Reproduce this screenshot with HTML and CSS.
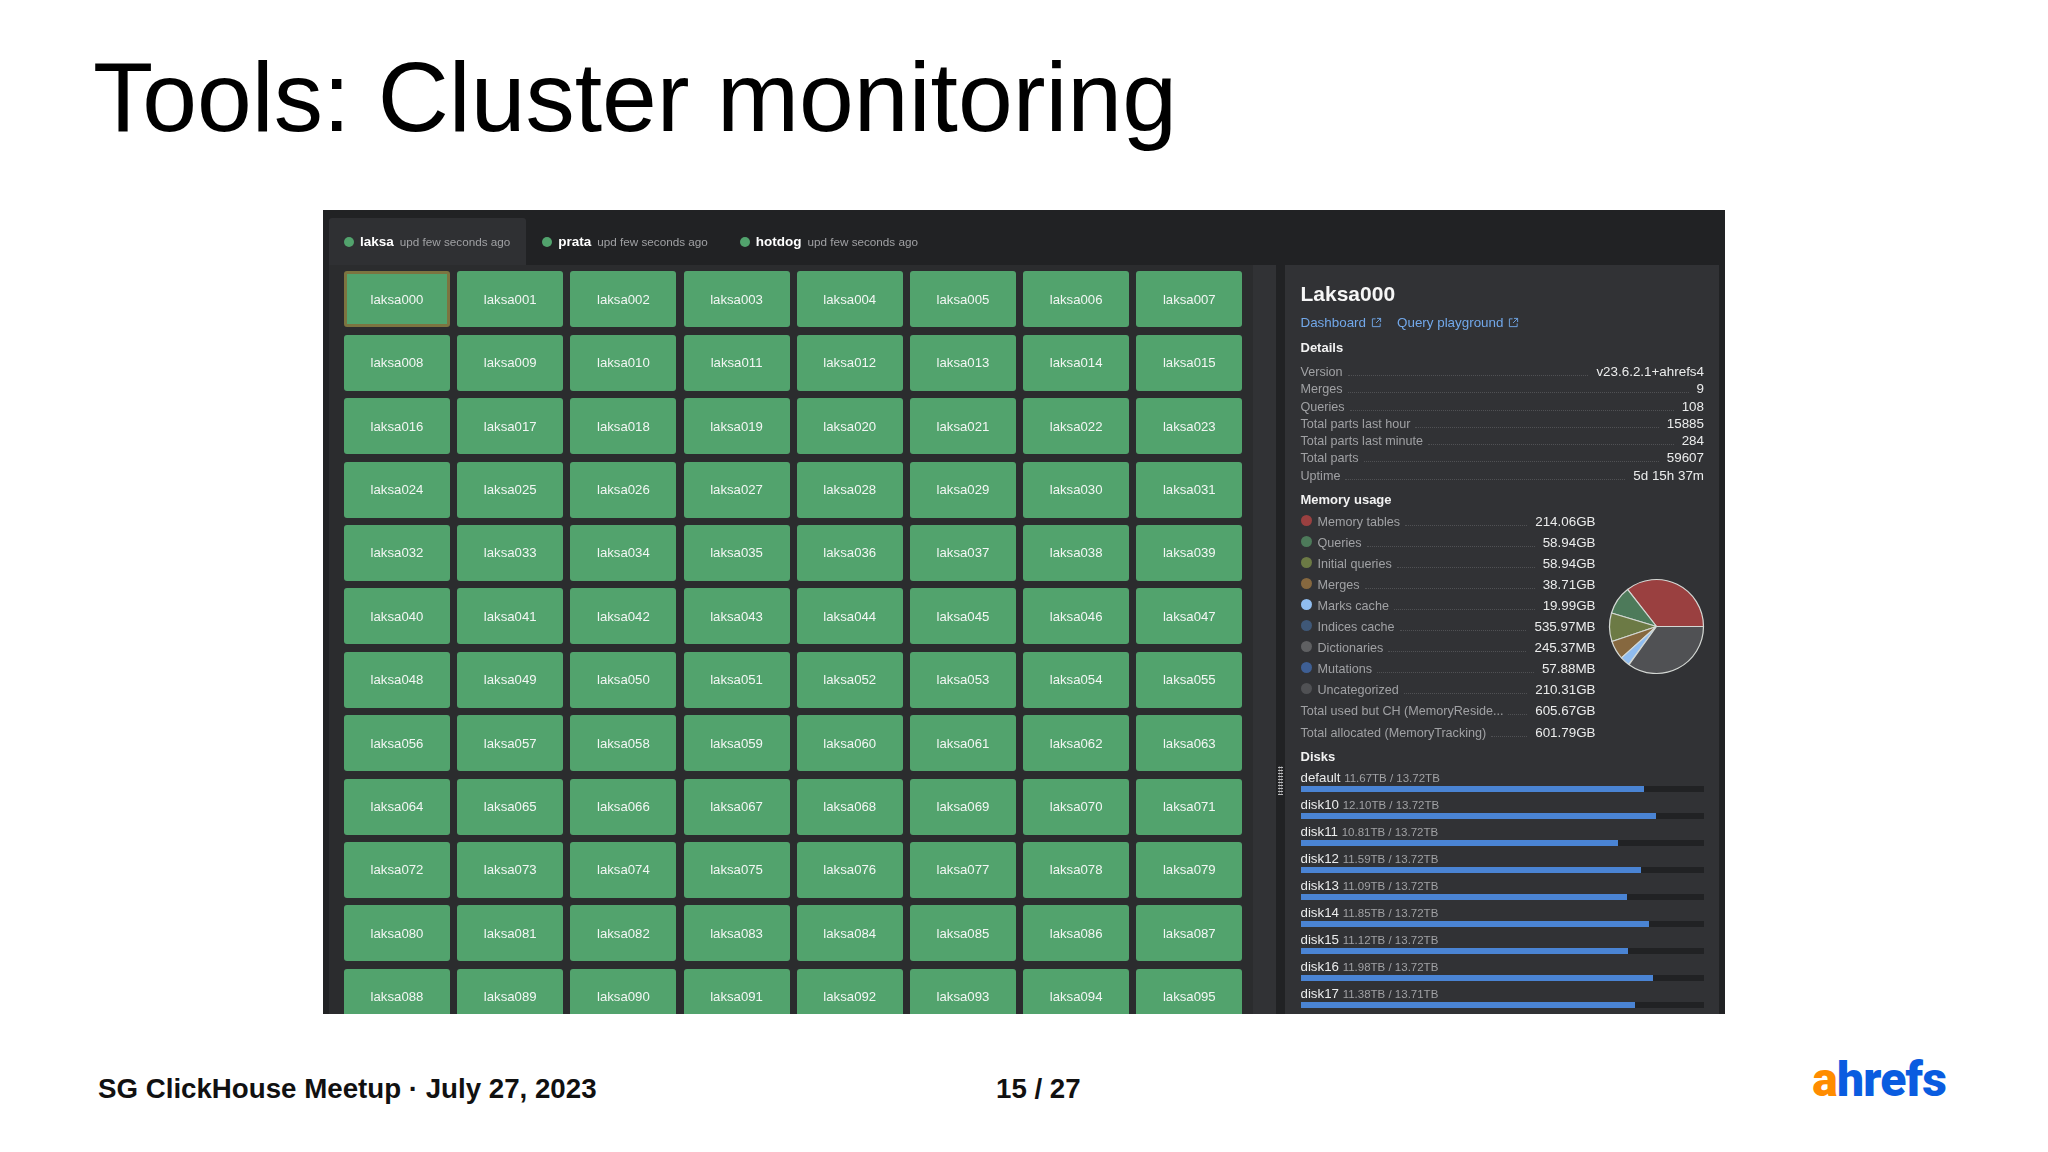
FILE: index.html
```html
<!DOCTYPE html>
<html lang="en">
<head>
  <meta charset="UTF-8" />
  <title>Tools: Cluster monitoring</title>
  <link rel="stylesheet" href="styles.css">
</head>
<body>

<div class="slide">
  <h1 class="slide-title">Tools: Cluster monitoring</h1>

  <div class="shot">
    <div class="tabs">
      <div class="tab active"><span class="dot"></span><b>laksa</b><span class="upd">upd few seconds ago</span></div>
      <div class="tab"><span class="dot"></span><b>prata</b><span class="upd">upd few seconds ago</span></div>
      <div class="tab"><span class="dot"></span><b>hotdog</b><span class="upd">upd few seconds ago</span></div>
    </div>

    <div class="shot-body">
      <div class="nodes-pane">
        <div class="nodes">
          <div class="node selected">laksa000</div>
          <div class="node">laksa001</div>
          <div class="node">laksa002</div>
          <div class="node">laksa003</div>
          <div class="node">laksa004</div>
          <div class="node">laksa005</div>
          <div class="node">laksa006</div>
          <div class="node">laksa007</div>
          <div class="node">laksa008</div>
          <div class="node">laksa009</div>
          <div class="node">laksa010</div>
          <div class="node">laksa011</div>
          <div class="node">laksa012</div>
          <div class="node">laksa013</div>
          <div class="node">laksa014</div>
          <div class="node">laksa015</div>
          <div class="node">laksa016</div>
          <div class="node">laksa017</div>
          <div class="node">laksa018</div>
          <div class="node">laksa019</div>
          <div class="node">laksa020</div>
          <div class="node">laksa021</div>
          <div class="node">laksa022</div>
          <div class="node">laksa023</div>
          <div class="node">laksa024</div>
          <div class="node">laksa025</div>
          <div class="node">laksa026</div>
          <div class="node">laksa027</div>
          <div class="node">laksa028</div>
          <div class="node">laksa029</div>
          <div class="node">laksa030</div>
          <div class="node">laksa031</div>
          <div class="node">laksa032</div>
          <div class="node">laksa033</div>
          <div class="node">laksa034</div>
          <div class="node">laksa035</div>
          <div class="node">laksa036</div>
          <div class="node">laksa037</div>
          <div class="node">laksa038</div>
          <div class="node">laksa039</div>
          <div class="node">laksa040</div>
          <div class="node">laksa041</div>
          <div class="node">laksa042</div>
          <div class="node">laksa043</div>
          <div class="node">laksa044</div>
          <div class="node">laksa045</div>
          <div class="node">laksa046</div>
          <div class="node">laksa047</div>
          <div class="node">laksa048</div>
          <div class="node">laksa049</div>
          <div class="node">laksa050</div>
          <div class="node">laksa051</div>
          <div class="node">laksa052</div>
          <div class="node">laksa053</div>
          <div class="node">laksa054</div>
          <div class="node">laksa055</div>
          <div class="node">laksa056</div>
          <div class="node">laksa057</div>
          <div class="node">laksa058</div>
          <div class="node">laksa059</div>
          <div class="node">laksa060</div>
          <div class="node">laksa061</div>
          <div class="node">laksa062</div>
          <div class="node">laksa063</div>
          <div class="node">laksa064</div>
          <div class="node">laksa065</div>
          <div class="node">laksa066</div>
          <div class="node">laksa067</div>
          <div class="node">laksa068</div>
          <div class="node">laksa069</div>
          <div class="node">laksa070</div>
          <div class="node">laksa071</div>
          <div class="node">laksa072</div>
          <div class="node">laksa073</div>
          <div class="node">laksa074</div>
          <div class="node">laksa075</div>
          <div class="node">laksa076</div>
          <div class="node">laksa077</div>
          <div class="node">laksa078</div>
          <div class="node">laksa079</div>
          <div class="node">laksa080</div>
          <div class="node">laksa081</div>
          <div class="node">laksa082</div>
          <div class="node">laksa083</div>
          <div class="node">laksa084</div>
          <div class="node">laksa085</div>
          <div class="node">laksa086</div>
          <div class="node">laksa087</div>
          <div class="node">laksa088</div>
          <div class="node">laksa089</div>
          <div class="node">laksa090</div>
          <div class="node">laksa091</div>
          <div class="node">laksa092</div>
          <div class="node">laksa093</div>
          <div class="node">laksa094</div>
          <div class="node">laksa095</div>
        </div>
        <div class="scroll-track"></div>
      </div>

      <div class="splitter"><div class="grip"></div></div>

      <div class="details">
        <h2 class="node-name">Laksa000</h2>
        <div class="links">
          <a href="#">Dashboard
            <svg class="ext" viewBox="0 0 12 12"><path d="M5 2H1.5v8.5H10V7M6.5 1.5h4v4M10.5 1.5 5.5 6.5"/></svg>
          </a>
          <a href="#">Query playground
            <svg class="ext" viewBox="0 0 12 12"><path d="M5 2H1.5v8.5H10V7M6.5 1.5h4v4M10.5 1.5 5.5 6.5"/></svg>
          </a>
        </div>

        <h3 class="details-head">Details</h3>
        <div class="kv-list">
          <div class="kv"><span class="k">Version</span><i></i><span class="v">v23.6.2.1+ahrefs4</span></div>
          <div class="kv"><span class="k">Merges</span><i></i><span class="v">9</span></div>
          <div class="kv"><span class="k">Queries</span><i></i><span class="v">108</span></div>
          <div class="kv"><span class="k">Total parts last hour</span><i></i><span class="v">15885</span></div>
          <div class="kv"><span class="k">Total parts last minute</span><i></i><span class="v">284</span></div>
          <div class="kv"><span class="k">Total parts</span><i></i><span class="v">59607</span></div>
          <div class="kv"><span class="k">Uptime</span><i></i><span class="v">5d 15h 37m</span></div>
        </div>

        <h3 class="details-head mem-head">Memory usage</h3>
        <div class="memory">
          <div class="mem-list">
            <div class="kv"><span class="swatch c-tables"></span><span class="k">Memory tables</span><i></i><span class="v">214.06GB</span></div>
            <div class="kv"><span class="swatch c-queries"></span><span class="k">Queries</span><i></i><span class="v">58.94GB</span></div>
            <div class="kv"><span class="swatch c-initial"></span><span class="k">Initial queries</span><i></i><span class="v">58.94GB</span></div>
            <div class="kv"><span class="swatch c-merges"></span><span class="k">Merges</span><i></i><span class="v">38.71GB</span></div>
            <div class="kv"><span class="swatch c-marks"></span><span class="k">Marks cache</span><i></i><span class="v">19.99GB</span></div>
            <div class="kv"><span class="swatch c-indices"></span><span class="k">Indices cache</span><i></i><span class="v">535.97MB</span></div>
            <div class="kv"><span class="swatch c-dicts"></span><span class="k">Dictionaries</span><i></i><span class="v">245.37MB</span></div>
            <div class="kv"><span class="swatch c-mutations"></span><span class="k">Mutations</span><i></i><span class="v">57.88MB</span></div>
            <div class="kv"><span class="swatch c-other"></span><span class="k">Uncategorized</span><i></i><span class="v">210.31GB</span></div>
            <div class="kv"><span class="k">Total used but CH (MemoryReside...</span><i></i><span class="v">605.67GB</span></div>
            <div class="kv"><span class="k">Total allocated (MemoryTracking)</span><i></i><span class="v">601.79GB</span></div>
          </div>
          <svg class="pie" viewBox="1.5 1.5 97 97">
            <path fill="#9a4040" d="M50 50H97A47 47 0 0 0 21.03 12.99Z"/>
            <path fill="#4d7a5a" d="M50 50L21.03 12.99A47 47 0 0 0 4.98 36.49Z"/>
            <path fill="#6c7a45" d="M50 50L4.98 36.49A47 47 0 0 0 5.45 64.99Z"/>
            <path fill="#86683f" d="M50 50L5.45 64.99A47 47 0 0 0 14.96 81.33Z"/>
            <path fill="#90bdf0" d="M50 50L14.96 81.33A47 47 0 0 0 22.24 87.93Z"/>
            <path fill="#505154" d="M50 50L22.58 88.17A47 47 0 0 0 97 50Z"/>
          </svg>
        </div>

        <h3 class="details-head disks-head">Disks</h3>
        <div class="disks">
          <div class="disk"><div class="disk-label">default <span>11.67TB / 13.72TB</span></div><div class="bar"><div class="fill" style="width:85.1%"></div></div></div>
          <div class="disk"><div class="disk-label">disk10 <span>12.10TB / 13.72TB</span></div><div class="bar"><div class="fill" style="width:88.2%"></div></div></div>
          <div class="disk"><div class="disk-label">disk11 <span>10.81TB / 13.72TB</span></div><div class="bar"><div class="fill" style="width:78.8%"></div></div></div>
          <div class="disk"><div class="disk-label">disk12 <span>11.59TB / 13.72TB</span></div><div class="bar"><div class="fill" style="width:84.5%"></div></div></div>
          <div class="disk"><div class="disk-label">disk13 <span>11.09TB / 13.72TB</span></div><div class="bar"><div class="fill" style="width:80.8%"></div></div></div>
          <div class="disk"><div class="disk-label">disk14 <span>11.85TB / 13.72TB</span></div><div class="bar"><div class="fill" style="width:86.4%"></div></div></div>
          <div class="disk"><div class="disk-label">disk15 <span>11.12TB / 13.72TB</span></div><div class="bar"><div class="fill" style="width:81.1%"></div></div></div>
          <div class="disk"><div class="disk-label">disk16 <span>11.98TB / 13.72TB</span></div><div class="bar"><div class="fill" style="width:87.3%"></div></div></div>
          <div class="disk"><div class="disk-label">disk17 <span>11.38TB / 13.71TB</span></div><div class="bar"><div class="fill" style="width:83%"></div></div></div>
        </div>
      </div>
    </div>
  </div>

  <footer class="slide-footer">
    <div class="event">SG ClickHouse Meetup · July 27, 2023</div>
    <div class="page-no">15 / 27</div>
    <div class="logo"><span class="logo-a">a</span>hrefs</div>
  </footer>
</div>

</body>
</html>
```

FILE: styles.css
```css
html, body {
  margin: 0; padding: 0;
  background: #ffffff;
  font-family: "Liberation Sans", Arial, sans-serif;
}

.slide {
  width: 2048px;
  height: 1152px;
  padding-top: 42px;
  box-sizing: border-box;
  overflow: hidden;
}

.slide-title {
  margin: 0 0 58px 93px;
  font-size: 98.5px;
  line-height: 110px;
  font-weight: 400;
  color: #000000;
  white-space: nowrap;
}

/* the screenshot inside the slide, soft because it was scaled up */
.shot {
  margin-left: 323px;
  width: 1402px;
  height: 804px;
  background: #212224;
  overflow: hidden;
  display: flex;
  flex-direction: column;
  filter: blur(0.35px);
}

.tabs {
  display: flex;
  height: 47px;
  margin-top: 8px;
  margin-left: 6px;
  flex-shrink: 0;
}

.tab {
  display: flex;
  align-items: center;
  padding: 0 16px;
  color: #ffffff;
  font-size: 13.5px;
  border-radius: 3px 3px 0 0;
}

.tab.active {
  padding-left: 15px;
  background: #2f3033;
}

.tab .dot {
  width: 10px;
  height: 10px;
  border-radius: 50%;
  background: #52a36d;
  margin-right: 6px;
}

.tab .upd {
  margin-left: 6px;
  font-size: 11.7px;
  color: #a0a1a4;
}

.shot-body {
  display: flex;
  flex: 1;
  min-height: 0;
  margin-left: 6px;
}

.nodes-pane {
  width: 947px;
  background: #2b2c2e;
  display: flex;
  justify-content: space-between;
  padding-left: 15px;
  box-sizing: border-box;
  overflow: hidden;
}

.nodes {
  display: grid;
  grid-template-columns: repeat(8, 106px);
  grid-auto-rows: 56px;
  column-gap: 7.2px;
  row-gap: 7.4px;
  padding-top: 6.4px;
  height: max-content;
}

.scroll-track {
  width: 23px;
  background: #313235;
}

.node {
  display: flex;
  align-items: center;
  justify-content: center;
  background: #52a36d;
  color: #f2f6f3;
  font-size: 13.2px;
  border-radius: 3px;
}

.node.selected {
  border: 3px solid #7c7440;
  box-sizing: border-box;
}

.splitter {
  width: 9px;
  position: relative;
  flex-shrink: 0;
}

.grip {
  position: absolute;
  left: 2px;
  top: 501px;
  width: 5px;
  height: 29px;
  background-image: radial-gradient(circle, #b9babc 0.9px, transparent 1.1px);
  background-size: 2.5px 3px;
}

.details {
  width: 434px;
  background: #313235;
  padding: 15px 15px 0 15.5px;
  box-sizing: border-box;
  overflow: hidden;
}

.node-name {
  margin: 0;
  font-size: 21px;
  line-height: 28px;
  font-weight: 700;
  color: #f6f6f6;
}

.links {
  display: flex;
  gap: 15px;
  margin-top: 5.5px;
  height: 18px;
  align-items: center;
}

.links a {
  display: flex;
  align-items: center;
  gap: 5px;
  color: #72a8ea;
  font-size: 13.4px;
  text-decoration: none;
}

.ext {
  width: 11px;
  height: 11px;
  fill: none;
  stroke: #72a8ea;
  stroke-width: 1;
}

.details-head {
  margin: 7.5px 0 0 0;
  font-size: 13px;
  line-height: 18px;
  font-weight: 700;
  color: #f2f2f2;
}

.mem-head { margin-top: 6.5px; }
.disks-head { margin-top: 5px; }

.kv-list {
  margin-top: 6px;
}

.kv {
  display: flex;
  align-items: baseline;
  height: 17.3px;
  line-height: 17.3px;
  font-size: 13.4px;
}

.kv .k {
  font-size: 12.6px;
  color: #a0a1a4;
  white-space: nowrap;
}

.kv .v {
  color: #ebecec;
  white-space: nowrap;
}

.kv i {
  flex: 1;
  margin: 0 8px 0 5px;
  border-bottom: 1px dotted #505154;
}

.memory {
  display: flex;
  justify-content: space-between;
  align-items: center;
  margin-top: 2px;
}

.mem-list {
  width: 295px;
}

.mem-list .kv {
  height: 21.1px;
  line-height: 21.1px;
}

.swatch {
  width: 11px;
  height: 11px;
  border-radius: 50%;
  margin-right: 6px;
  flex-shrink: 0;
  align-self: center;
  position: relative;
  top: -1px;
}

.c-tables { background: #9a4040; }
.c-queries { background: #4d7a5a; }
.c-initial { background: #6c7a45; }
.c-merges { background: #86683f; }
.c-marks { background: #90bdf0; }
.c-indices { background: #3f5878; }
.c-dicts { background: #5f6062; }
.c-mutations { background: #3e5f94; }
.c-other { background: #505154; }

.pie {
  width: 97px;
  height: 97px;
  margin-right: -1px;
  flex-shrink: 0;
  overflow: visible;
}

.pie path {
  stroke: #d4d8d4;
  stroke-width: 1.2;
  stroke-linejoin: round;
}

.disks {
  margin-top: 4.5px;
}

.disk {
  margin-bottom: 5px;
}

.disk-label {
  height: 16px;
  line-height: 16px;
  font-size: 13.3px;
  color: #ebecec;
  white-space: nowrap;
}

.disk-label span {
  font-size: 11.5px;
  color: #a0a1a4;
}

.bar {
  height: 6px;
  background: #212224;
}

.fill {
  height: 100%;
  background: #4a84d4;
}

/* slide footer */
.slide-footer {
  display: grid;
  grid-template-columns: 898px 1fr auto;
  align-items: center;
  margin-top: 55px;
  padding: 0 102px 0 98px;
  height: 40px;
  font-size: 27.7px;
  font-weight: 700;
  color: #111111;
}

.logo {
  margin-top: -18px;
  font-family: Roboto, sans-serif;
  font-weight: 900;
  font-size: 48px;
  line-height: 40px;
  letter-spacing: -0.8px;
  color: #0a5ce0;
}

.logo-a {
  color: #ff8c00;
}
```
